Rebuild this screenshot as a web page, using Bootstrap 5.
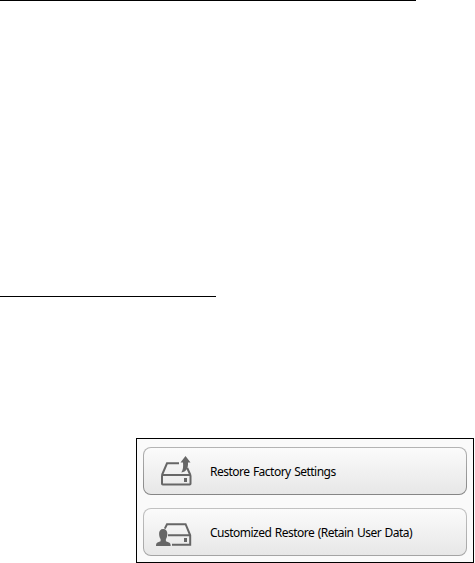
<!DOCTYPE html>
<html lang="en">
  <head>
    <meta charset="UTF-8" />
    <meta name="viewport" content="width=device-width, initial-scale=1.0" />
    <title>Restore Options</title>
    <link
      href="https://cdn.jsdelivr.net/npm/bootstrap@5.3.3/dist/css/bootstrap.min.css"
      rel="stylesheet"
    />
    <style>
      body {
        height: 563px;
        overflow: hidden;
        background-color: #fff;
        font-family: "Noto Sans", "Open Sans", sans-serif;
      }

      .rule {
        height: 1px;
        background-color: #000;
      }

      .rule-top {
        width: 416px;
      }

      .rule-section {
        width: 216px;
        margin-top: 295px;
      }

      .restore-panel {
        width: 338px;
        height: 125px;
        margin: 141px 0 0 136px;
        padding: 8px 6px 0;
        gap: 13px;
        border: 1px solid #000;
        background-color: #fafafa;
      }

      .restore-btn {
        height: 48px;
        padding: 0 0 0 12px;
        border: 1px solid transparent;
        border-radius: 8px;
        background: linear-gradient(#fbfbfb, #e7e7e7) padding-box,
          linear-gradient(#b4b4b4, #858585) border-box;
        color: #000;
        font-size: 12px;
        line-height: 16px;
      }

      .restore-btn-light {
        background: linear-gradient(#fbfbfb, #e7e7e7) padding-box,
          linear-gradient(#c2c2c2, #a4a4a4) border-box;
      }

      .restore-btn svg {
        width: 40px;
        height: 40px;
        margin-right: 14px;
      }

      .restore-label {
        padding-top: 2px;
        letter-spacing: -0.52px;
        word-spacing: 0.9px;
        white-space: nowrap;
      }
    </style>
  </head>
  <body>
    <div class="rule rule-top"></div>
    <div class="rule rule-section"></div>

    <div class="restore-panel d-flex flex-column">
      <button type="button" class="btn restore-btn d-flex align-items-center w-100">
        <!-- drive with arrow -->
        <svg viewBox="0 0 40 40" fill="none" stroke="#666" stroke-width="2">
          <rect x="6" y="24" width="28.5" height="9.5" rx="0.8" />
          <path d="M6 24L11 12.3H23M31.2 17L34.4 24" />
          <rect x="28" y="27" width="3" height="4" fill="#666" stroke="none" />
          <path
            d="M29.5 5L34.5 11.5H32C32.3 17 30.5 20.9 25.3 21.5C27.2 18.5 27.3 15.5 27 11.5H24.5Z"
            fill="#666"
            stroke="none"
          />
        </svg>
        <span class="restore-label">Restore Factory Settings</span>
      </button>

      <button
        type="button"
        class="btn restore-btn restore-btn-light d-flex align-items-center w-100"
      >
        <!-- drive with user -->
        <svg viewBox="0 0 40 40" fill="none" stroke="#666" stroke-width="2">
          <path d="M8.8 16.6L11 12.2H29.6L34.2 23.3V32.8H16M12 23.3H34" />
          <rect x="28" y="26" width="3" height="4" fill="#666" stroke="none" />
          <path
            d="M7.2 17C10 17 11.5 19 11.3 22C11.2 24.5 10.7 26 9.9 27V29.3L13 30.6C14.2 31.2 14.7 32.3 14.7 34H0C0 32.3 0.4 31.2 1.5 30.6L4.6 29.3V27C3.8 26 3.2 24.5 3.1 22C2.9 19 4.4 17 7.2 17Z"
            fill="#666"
            stroke="none"
          />
        </svg>
        <span class="restore-label">Customized Restore (Retain User Data)</span>
      </button>
    </div>

    <script src="https://cdn.jsdelivr.net/npm/bootstrap@5.3.3/dist/js/bootstrap.bundle.min.js"></script>
  </body>
</html>
